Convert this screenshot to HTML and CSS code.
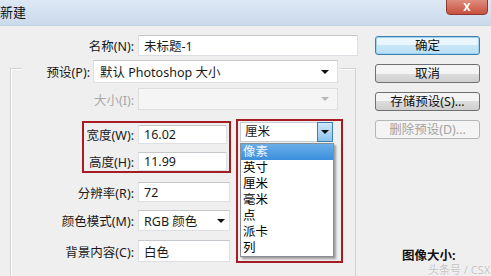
FILE: index.html
```html
<!DOCTYPE html>
<html lang="zh-CN">
<head>
    <meta charset="UTF-8">
    <title>新建</title>
    <link rel="stylesheet" href="styles.css">
</head>
<body>
    <div class="titlebar">
        <span class="title">新建</span>
        <span class="close">X</span>
    </div>
    <div class="dialog">
        <div class="form">
            <div class="row name-row">
                <span class="label">名称(N):</span>
                <div class="field input">未标题-1</div>
            </div>
            <div class="frame">
                <div class="preset-row">
                    <span class="label">预设(P):</span>
                    <div class="field select">默认 Photoshop 大小<span class="arrow"></span></div>
                </div>
                <div class="row size-row disabled">
                    <span class="label">大小(I):</span>
                    <div class="field select"><span class="arrow"></span></div>
                </div>
                <div class="grid">
                    <div class="left">
                        <div class="mark dims">
                            <div class="row">
                                <span class="label">宽度(W):</span>
                                <div class="field input">16.02</div>
                            </div>
                            <div class="row">
                                <span class="label">高度(H):</span>
                                <div class="field input">11.99</div>
                            </div>
                        </div>
                        <div class="row res-row">
                            <span class="label">分辨率(R):</span>
                            <div class="field input">72</div>
                        </div>
                        <div class="row mode-row">
                            <span class="label">颜色模式(M):</span>
                            <div class="field select">RGB 颜色<span class="arrow"></span></div>
                        </div>
                        <div class="row bg-row">
                            <span class="label">背景内容(C):</span>
                            <div class="field select">白色</div>
                        </div>
                    </div>
                    <div class="mark units">
                        <div class="unit-select">厘米<span class="unit-btn"><span class="arrow"></span></span></div>
                        <ul class="unit-list">
                            <li class="active">像素</li>
                            <li>英寸</li>
                            <li>厘米</li>
                            <li>毫米</li>
                            <li>点</li>
                            <li>派卡</li>
                            <li>列</li>
                        </ul>
                    </div>
                </div>
            </div>
        </div>
        <div class="buttons">
            <div class="btn default">确定</div>
            <div class="btn">取消</div>
            <div class="btn">存储预设(S)...</div>
            <div class="btn off">删除预设(D)...</div>
            <div class="image-size">图像大小:</div>
        </div>
    </div>
    <div class="watermark">头条号 / CSX</div>
</body>
</html>
```

FILE: styles.css
```css
* { box-sizing: border-box; }
body {
    margin: 0;
    width: 491px;
    height: 276px;
    overflow: hidden;
    background: #efefef;
    font-family: "Noto Sans", "Noto Sans CJK SC", sans-serif;
    font-size: 12.5px;
    color: #1a1a1a;
    position: relative;
}
.titlebar {
    height: 26px;
    display: flex;
    justify-content: space-between;
    background: linear-gradient(#dde8f4, #cbdaeb);
    border-bottom: 1px solid #c2d0e0;
}
.title {
    margin-left: 0;
    line-height: 24px;
    font-size: 13px;
    color: #111;
}
.close {
    width: 42px;
    height: 19px;
    margin-top: -4px;
    margin-right: 3px;
    padding-top: 4px;
    border: 1px solid #8a3a33;
    border-radius: 0 0 4px 4px;
    background: linear-gradient(#e39a8c, #c8503e);
    color: #fff;
    font-weight: bold;
    font-size: 11px;
    text-align: center;
    line-height: 12px;
}
.dialog { display: flex; }
.form {
    width: 360px;
    padding-top: 9px;
}
.row {
    display: flex;
    align-items: center;
    gap: 4px;
}
.label {
    flex: none;
    text-align: right;
    white-space: nowrap;
}
.field {
    position: relative;
    display: flex;
    align-items: center;
    padding-left: 5px;
    background: #fff;
    border: 1px solid #dcdfe3;
    border-top-color: #c4c8cd;
    white-space: nowrap;
}
.arrow {
    position: absolute;
    right: 8px;
    top: 50%;
    margin-top: -2px;
    border-left: 4px solid transparent;
    border-right: 4px solid transparent;
    border-top: 4px solid #111;
}
.name-row .label { width: 134px; }
.name-row .field { width: 220px; height: 21px; }

.frame {
    margin: 12px 0 0 10px;
    width: 346px;
    height: 220px;
    border: 1px solid #cfd3d6;
    border-bottom: none;
    box-shadow: inset 1px 1px #fff;
}
.preset-row {
    display: flex;
    align-items: center;
    gap: 3px;
    margin: -9px 0 0 11px;
    width: 318px;
    background: #efefef;
}
.preset-row .label { width: 68px; }
.preset-row .field { width: 245px; height: 23px; padding-left: 6px; }

.size-row { margin-top: 5px; }
.size-row .label { width: 123px; }
.size-row .field { width: 200px; height: 22px; background: #f5f5f5; border-color: #dedede; }
.disabled .label { color: #a8a8a8; }
.disabled .arrow { border-top-color: #b8b8b8; }

.grid {
    display: grid;
    grid-template-columns: 220px 107px;
    column-gap: 5px;
    align-items: start;
    margin-top: 9px;
}
.mark { border: 2px solid #a51d22; }
.dims {
    margin: 2px 0 0 71px;
    width: 149px;
    padding: 2px 2px 0 0;
}
.dims .label { width: 50px; }
.dims .field { width: 89px; height: 19px; }
.dims .row + .row { margin-top: 8px; }
.left > .row .label { width: 123px; }
.left > .row .field { width: 92px; }
.res-row { margin-top: 9px; }
.res-row .field { height: 20px; }
.mode-row { margin-top: 8px; }
.mode-row .field { height: 21px; }
.mode-row .arrow { right: 4px; }
.bg-row { margin-top: 9px; }
.bg-row .field { height: 22px; }

.units {
    padding: 1px 0 4px 2px;
}
.unit-select {
    position: relative;
    width: 93px;
    height: 20px;
    padding-left: 4px;
    line-height: 18px;
    background: #fff;
    border: 1px solid #c9ccd0;
}
.unit-btn {
    position: absolute;
    right: -1px;
    top: -1px;
    width: 16px;
    height: 20px;
    border: 1px solid #3c7fb1;
    background: linear-gradient(#cfe7f9, #8cc2ec);
}
.unit-btn .arrow { right: 3px; }
.unit-list {
    list-style: none;
    margin: 1px 0 0;
    padding: 0;
    width: 94px;
    background: #fff;
    border: 1px solid #8a8f96;
    box-shadow: 2px 2px 2px rgba(0, 0, 0, 0.35);
}
.unit-list li {
    height: 16px;
    line-height: 16px;
    padding-left: 2px;
    color: #000;
}
.unit-list .active {
    background: linear-gradient(#6aaee8, #3b8fdc);
    color: #eef6ff;
}

.buttons {
    width: 105px;
    margin-left: 15px;
    padding-top: 10px;
}
.btn {
    height: 19px;
    margin-bottom: 9px;
    border: 1px solid #707070;
    border-radius: 3px;
    background: linear-gradient(#f4f4f4 50%, #dddddd 50%, #cfcfcf);
    text-align: center;
    line-height: 17px;
    color: #111;
}
.btn.default {
    border-color: #3c7fb1;
    box-shadow: inset 0 0 0 1px #9fd2f1;
    background: linear-gradient(#eaf6fd 50%, #c8e6f7 50%, #b9dff5);
}
.btn.off {
    border-color: #b3b7ba;
    background: #f4f4f4;
    color: #a3a3a3;
}
.image-size {
    margin-top: 106px;
    padding-left: 27px;
    font-weight: bold;
    color: #111;
}
.watermark {
    position: absolute;
    left: 428px;
    top: 261px;
    font-size: 11px;
    color: rgba(180, 180, 180, 0.8);
    text-shadow: 0 0 1px #fff;
}
```
